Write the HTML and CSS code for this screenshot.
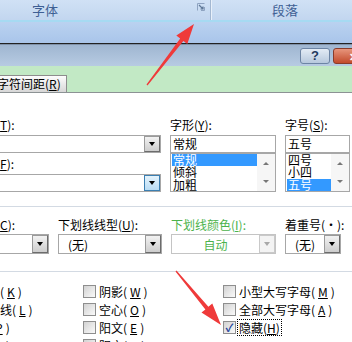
FILE: index.html
```html
<!DOCTYPE html>
<html lang="zh-CN">
<head>
    <meta charset="UTF-8">
    <meta name="viewport" content="width=device-width, initial-scale=1.0">
    <title>字体</title>
    <link rel="stylesheet" href="styles.css">
</head>
<body>
    <div class="screen">
        <div class="ribbon">
            <div class="group group-font">
                <span class="group-label">字体</span>
                <svg class="launcher" width="8" height="8" viewBox="0 0 8 8">
                    <path d="M0.5 7.5 V0.5 H7.5" fill="none" stroke="#8ea3c1" />
                    <path d="M2 2 L6 6 M6 3.5 V6 H3.5" fill="none" stroke="#5f7898" stroke-width="1.2" />
                    <path d="M7.5 4 V7.5 H4" fill="none" stroke="#8ea3c1" />
                </svg>
            </div>
            <div class="group group-para">
                <span class="group-label">段落</span>
            </div>
        </div>
        <div class="ribbon-body"></div>

        <div class="titlebar">
            <span class="tb-btn help">?</span>
            <span class="tb-btn close">✕</span>
        </div>

        <div class="tabs">
            <div class="tab">字符间距(<u>R</u>)</div>
        </div>

        <div class="panel">
            <div class="inner">
                <div class="sec-fonts">
                    <div class="col">
                        <div class="label">中文字体(<u>T</u>):</div>
                        <div class="combo"><span class="drop"></span></div>
                        <div class="label label-2">西文字体(<u>F</u>):</div>
                        <div class="combo combo-2"><span class="drop drop-hover"></span></div>
                    </div>
                    <div class="col">
                        <div class="label">字形(<u>Y</u>):</div>
                        <div class="field">常规</div>
                        <div class="listbox">
                            <div class="items">
                                <div class="item selected">常规</div>
                                <div class="item">倾斜</div>
                                <div class="item">加粗</div>
                            </div>
                            <div class="scroll"><span class="up"></span><span class="down"></span></div>
                        </div>
                    </div>
                    <div class="col">
                        <div class="label">字号(<u>S</u>):</div>
                        <div class="field">五号</div>
                        <div class="listbox">
                            <div class="items">
                                <div class="item">四号</div>
                                <div class="item">小四</div>
                                <div class="item selected">五号</div>
                            </div>
                            <div class="scroll"><span class="up"></span><span class="down"></span></div>
                        </div>
                    </div>
                </div>

                <div class="sep sep-1"></div>

                <div class="sec-text">
                    <div class="col">
                        <div class="label">字体颜色(<u>C</u>):</div>
                        <div class="combo tall"><span class="drop"></span></div>
                    </div>
                    <div class="col">
                        <div class="label">下划线线型(<u>U</u>):</div>
                        <div class="combo tall"><span class="value">(无)</span><span class="drop"></span></div>
                    </div>
                    <div class="col">
                        <div class="label disabled">下划线颜色(<u>I</u>):</div>
                        <div class="combo tall off"><span class="value center">自动</span><span class="drop"></span></div>
                    </div>
                    <div class="col">
                        <div class="label nowrap">着重号(·):</div>
                        <div class="combo tall"><span class="value">(无)</span><span class="drop"></span></div>
                    </div>
                </div>

                <div class="sep sep-2"></div>

                <div class="sec-effects">
                    <div class="checks">
                        <div class="check"><span class="box"></span>删除线(<u>K</u>)</div>
                        <div class="check"><span class="box"></span>双删除线(<u>L</u>)</div>
                        <div class="check"><span class="box"></span>上标(<u>P</u>)</div>
                        <div class="check"><span class="box"></span>下标(<u>B</u>)</div>
                    </div>
                    <div class="checks">
                        <div class="check"><span class="box"></span>阴影(<u>W</u>)</div>
                        <div class="check"><span class="box"></span>空心(<u>O</u>)</div>
                        <div class="check"><span class="box"></span>阳文(<u>E</u>)</div>
                        <div class="check"><span class="box"></span>阴文(<u>G</u>)</div>
                    </div>
                    <div class="checks">
                        <div class="check"><span class="box"></span>小型大写字母(<u>M</u>)</div>
                        <div class="check"><span class="box"></span>全部大写字母(<u>A</u>)</div>
                        <div class="check"><span class="box checked">✓</span><span class="focus">隐藏(<u>H</u>)</span></div>
                    </div>
                </div>
            </div>
        </div>

        <!-- red callout arrows drawn over the screenshot -->
        <svg class="arrows" width="352" height="342" viewBox="0 0 352 342">
            <polygon points="146.5,84.6 180.2,38.6 176.3,35.5 194,24 187.3,44.1 183.4,41.0 147.5,85.4" />
            <polygon points="176.5,270.6 208.4,306.8 212.3,303.6 221,325 201.5,312.6 205.4,309.4 175.5,271.4" />
        </svg>
    </div>
</body>
</html>
```

FILE: styles.css
```css
body {
    margin: 0;
    background: #fff;
}

.screen {
    width: 352px;
    height: 342px;
    position: relative;
    overflow: hidden;
    font-family: "Noto Sans CJK SC", "Liberation Sans", sans-serif;
    font-size: 12px;
    color: #000;
}

u {
    text-decoration: underline;
    text-underline-offset: 1px;
}

/* ribbon */

.ribbon {
    height: 20px;
    display: flex;
    background: linear-gradient(#d0e1f5, #c2d6ef);
    border-bottom: 2px solid #a6daf2;
}

.group {
    display: flex;
    align-items: center;
    flex-shrink: 0;
}

.group-font {
    width: 210px;
    border-right: 1px solid #a3b8d2;
    box-shadow: 1px 0 0 #e8f0fa;
}

.group-para {
    padding-left: 61px;
}

.group-label {
    color: #3e5f94;
    font-size: 13px;
    line-height: 20px;
}

.group-font .group-label {
    padding-left: 32px;
}

.launcher {
    margin: 3px 5px 0 auto;
    align-self: flex-start;
}

.ribbon-body {
    height: 21px;
    background: linear-gradient(#bad2f0, #a9c5ea);
    border-bottom: 1px solid #222;
}

/* dialog title bar */

.titlebar {
    height: 22px;
    display: flex;
    justify-content: flex-end;
    align-items: flex-start;
    padding-top: 3px;
    box-sizing: border-box;
    background: linear-gradient(#9fb6d1, #b7cbe2);
    border-top: 1px solid #7f91a8;
}

.tb-btn {
    flex-shrink: 0;
    height: 16px;
    box-sizing: border-box;
    border-radius: 3px;
    display: flex;
    align-items: center;
    justify-content: center;
    font-weight: bold;
    line-height: 14px;
}

.help {
    width: 30px;
    margin-right: 3px;
    border: 1px solid #6d84a4;
    background: linear-gradient(#e3ebf5, #b7c8dd);
    color: #1f3a5e;
    font-family: "Liberation Sans", sans-serif;
    font-size: 13px;
}

.close {
    width: 40px;
    margin-right: -21px;
    border: 1px solid #8a3b2a;
    background: linear-gradient(#e7957c, #c24a2b);
    color: #fff;
    font-size: 11px;
}

/* tabs */

.tabs {
    height: 26px;
    display: flex;
    align-items: flex-end;
    background: #c2e9c5;
    border-bottom: 1px solid #8c9294;
}

.tab {
    width: 71px;
    height: 17px;
    margin-left: -4px;
    box-sizing: border-box;
    border: 1px solid #8d8d8d;
    border-bottom: none;
    background: linear-gradient(#fdfdfd, #d7d7d7);
    line-height: 16px;
    white-space: nowrap;
}

/* panel */

.panel {
    padding-top: 24px;
    background: #fff;
}

.inner {
    margin-left: -52px;
}

.label {
    height: 16px;
    line-height: 16px;
    white-space: nowrap;
}

.label.disabled {
    color: #4cb34c;
}

.sec-fonts {
    display: grid;
    grid-template-columns: 213px 106px 65px;
    column-gap: 9px;
}

.sec-text {
    display: grid;
    grid-template-columns: 101px 104px 105px 56px;
    column-gap: 9px;
    margin-top: 10px;
}

.combo {
    height: 18px;
    margin-top: 2px;
    box-sizing: border-box;
    border: 1px solid #a7a7a7;
    display: flex;
    align-items: center;
    background: #fff;
}

.combo.tall {
    height: 20px;
    margin-top: 1px;
}

.label-2 {
    margin-top: 3px;
}

.combo-2 {
    margin-top: 2px;
}

.value {
    flex: 1;
    padding-left: 9px;
    white-space: nowrap;
}

.value.center {
    padding-left: 0;
    text-align: center;
    color: #4cb34c;
}

.drop {
    width: 16px;
    height: 16px;
    margin-left: auto;
    box-sizing: border-box;
    flex-shrink: 0;
    border: 1px solid #6c6c6c;
    border-left-color: #9a9a9a;
    border-top-color: #9a9a9a;
    background: linear-gradient(#f2f2f2, #cdcdcd);
    display: flex;
    align-items: center;
    justify-content: center;
}

.combo.tall .drop {
    height: 18px;
}

.drop::after {
    content: "";
    border-left: 3.5px solid transparent;
    border-right: 3.5px solid transparent;
    border-top: 4px solid #000;
}

.drop-hover {
    border-color: #3c7fb1;
    background: linear-gradient(#e4f3fc, #b9dcf4);
}

.combo.off {
    border-color: #c4c4c4;
}

.combo.off .drop {
    border-color: #c9c9c9;
    background: #f3f3f3;
}

.combo.off .drop::after {
    border-top-color: #a8a8a8;
}

.field {
    height: 18px;
    margin-top: 2px;
    box-sizing: border-box;
    border: 1px solid #a7a7a7;
    padding-left: 2px;
    line-height: 16px;
}

.listbox {
    height: 39px;
    box-sizing: border-box;
    border: 1px solid #a7a7a7;
    display: flex;
}

.items {
    flex: 1;
    padding: 0 0 0 1px;
}

.item {
    height: 12.4px;
    line-height: 12px;
    padding-left: 1px;
    white-space: nowrap;
}

.item.selected {
    background: #3399ff;
    color: #fff;
}

.scroll {
    width: 18px;
    display: flex;
    flex-direction: column;
    justify-content: space-around;
    align-items: center;
    background: #f6f6f6;
}

.scroll .up,
.scroll .down {
    border-left: 3px solid transparent;
    border-right: 3px solid transparent;
}

.scroll .up {
    border-bottom: 3px solid #777;
}

.scroll .down {
    border-top: 3px solid #777;
}

.sep {
    height: 1px;
    background: #d3dae3;
}

.sep-1 {
    margin-top: 14px;
}

.sep-2 {
    margin-top: 17px;
}

/* effect checkboxes */

.sec-effects {
    display: grid;
    grid-template-columns: 135px 140px auto;
    margin-top: 13px;
}

.checks {
    display: flex;
    flex-direction: column;
    gap: 5px;
}

.check {
    height: 13px;
    display: flex;
    align-items: center;
    gap: 3px;
    line-height: 13px;
    white-space: nowrap;
}

.box {
    width: 13px;
    height: 13px;
    box-sizing: border-box;
    flex-shrink: 0;
    border: 1px solid #8e8e8e;
    background: linear-gradient(135deg, #d2d2d2, #fafafa);
    display: flex;
    align-items: center;
    justify-content: center;
    color: #23449a;
    font-size: 11px;
    font-weight: bold;
    line-height: 11px;
}

.focus {
    outline: 1px dotted #000;
    outline-offset: 1px;
}

/* callout arrows */

.arrows {
    position: absolute;
    left: 0;
    top: 0;
    pointer-events: none;
}

.arrows polygon {
    fill: #ef3a3a;
}
```
